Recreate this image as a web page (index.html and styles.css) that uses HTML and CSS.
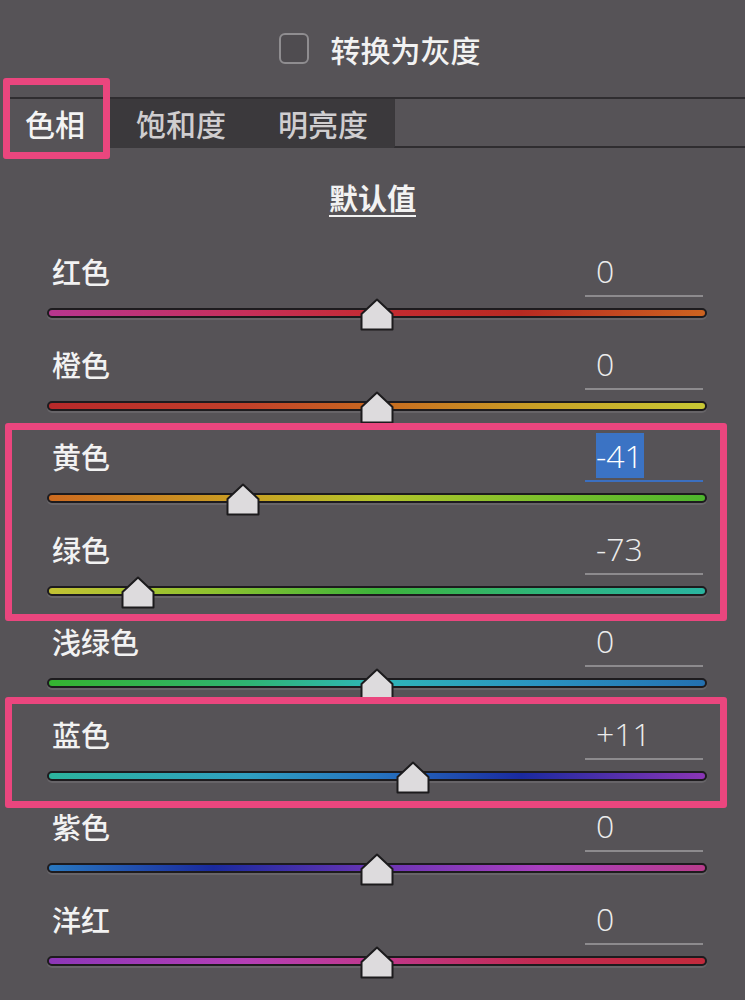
FILE: index.html
```html
<!DOCTYPE html>
<html lang="zh-CN">
<head>
    <meta charset="UTF-8">
    <meta name="viewport" content="width=device-width, initial-scale=1.0">
    <title>色相 / 饱和度 / 明亮度</title>
    <link rel="stylesheet" href="styles.css">
</head>
<body>
    <svg width="0" height="0" class="defs">
        <symbol id="thumb-shape" viewBox="0 0 34 33">
            <path d="M17 1.5 L32.5 16 L32.5 31.5 L1.5 31.5 L1.5 16 Z" fill="#dddbdd" stroke="#1c1b1d" stroke-width="2" stroke-linejoin="round"/>
        </symbol>
    </svg>

    <div class="panel">
        <div class="grayscale">
            <span class="checkbox"></span>
            <span class="grayscale-text">转换为灰度</span>
        </div>

        <div class="tabs">
            <div class="tab active">色相</div>
            <div class="tab-group">
                <div class="tab">饱和度</div>
                <div class="tab">明亮度</div>
            </div>
            <div class="tab-fill"></div>
        </div>

        <div class="defaults"><span class="defaults-link">默认值</span></div>

        <div class="sliders">
            <div class="slider">
                <div class="slider-head">
                    <span class="slider-label">红色</span>
                    <span class="slider-value">0</span>
                </div>
                <div class="track track-red">
                    <svg class="thumb" style="left: 50%"><use href="#thumb-shape"/></svg>
                </div>
            </div>
            <div class="slider">
                <div class="slider-head">
                    <span class="slider-label">橙色</span>
                    <span class="slider-value">0</span>
                </div>
                <div class="track track-orange">
                    <svg class="thumb" style="left: 50%"><use href="#thumb-shape"/></svg>
                </div>
            </div>
            <div class="slider">
                <div class="slider-head">
                    <span class="slider-label">黄色</span>
                    <span class="slider-value editing"><span class="selected">-41</span></span>
                </div>
                <div class="track track-yellow">
                    <svg class="thumb" style="left: 29.5%"><use href="#thumb-shape"/></svg>
                </div>
            </div>
            <div class="slider">
                <div class="slider-head">
                    <span class="slider-label">绿色</span>
                    <span class="slider-value">-73</span>
                </div>
                <div class="track track-green">
                    <svg class="thumb" style="left: 13.5%"><use href="#thumb-shape"/></svg>
                </div>
            </div>
            <div class="slider">
                <div class="slider-head">
                    <span class="slider-label">浅绿色</span>
                    <span class="slider-value">0</span>
                </div>
                <div class="track track-aqua">
                    <svg class="thumb" style="left: 50%"><use href="#thumb-shape"/></svg>
                </div>
            </div>
            <div class="slider">
                <div class="slider-head">
                    <span class="slider-label">蓝色</span>
                    <span class="slider-value">+11</span>
                </div>
                <div class="track track-blue">
                    <svg class="thumb" style="left: 55.5%"><use href="#thumb-shape"/></svg>
                </div>
            </div>
            <div class="slider">
                <div class="slider-head">
                    <span class="slider-label">紫色</span>
                    <span class="slider-value">0</span>
                </div>
                <div class="track track-purple">
                    <svg class="thumb" style="left: 50%"><use href="#thumb-shape"/></svg>
                </div>
            </div>
            <div class="slider">
                <div class="slider-head">
                    <span class="slider-label">洋红</span>
                    <span class="slider-value">0</span>
                </div>
                <div class="track track-magenta">
                    <svg class="thumb" style="left: 50%"><use href="#thumb-shape"/></svg>
                </div>
            </div>
        </div>

        <!-- highlight frames drawn over the panel -->
        <div class="mark mark-tab"></div>
        <div class="mark mark-yellow-green"></div>
        <div class="mark mark-blue"></div>
    </div>
</body>
</html>
```

FILE: styles.css
```css
body {
    margin: 0;
    background-color: #565357;
    font-family: 'Noto Sans CJK SC', 'Liberation Sans', sans-serif;
    color: #f2f2f2;
}

.defs {
    position: absolute;
}

.panel {
    position: relative;
    width: 745px;
    height: 1000px;
    overflow: hidden;
}

/* convert to grayscale checkbox */
.grayscale {
    height: 97px;
    display: flex;
    align-items: center;
    justify-content: center;
    padding-left: 14px;
    gap: 22px;
}

.checkbox {
    width: 30px;
    height: 31px;
    box-sizing: border-box;
    border: 2px solid #8f8d90;
    border-radius: 6px;
    background-color: #4f4c50;
}

.grayscale-text {
    font-size: 30px;
    font-weight: 500;
    line-height: 1;
}

/* tabs */
.tabs {
    display: flex;
    margin-left: 10px;
    border-top: 2px solid #2f2d30;
    height: 49px;
}

.tab {
    font-size: 30px;
    font-weight: 500;
    line-height: 49px;
    padding: 0 26px;
    color: #cfcdcf;
}

.tab.active {
    padding: 0 22px 0 15px;
    color: #f4f4f4;
}

.tab-group {
    display: flex;
    padding-left: 3px;
    background-color: #3b393c;
}

.tab-fill {
    flex: 1;
    border-left: 1px solid #3a383b;
    border-bottom: 2px solid #2f2d30;
}

/* reset link */
.defaults {
    height: 98px;
    display: flex;
    align-items: center;
    justify-content: center;
}

.defaults-link {
    font-size: 29px;
    font-weight: 700;
    line-height: 1;
    text-decoration: underline;
    text-underline-offset: 5px;
    text-decoration-thickness: 2px;
}

/* hue sliders */
.sliders {
    padding: 0 38px 0 47px;
}

.slider {
    height: 92.5px;
}

.slider-head {
    display: flex;
    justify-content: space-between;
    height: 51px;
}

.slider-label {
    padding-left: 5px;
    font-size: 29px;
    font-weight: 500;
    line-height: 50px;
}

.slider-value {
    width: 118px;
    margin-right: 4px;
    box-sizing: border-box;
    padding-left: 11px;
    border-bottom: 2px solid #8d8b8e;
    font-family: 'Open Sans', 'Liberation Sans', sans-serif;
    font-weight: 300;
    font-size: 32px;
    line-height: 49px;
    color: #ececec;
}

.slider-value.editing {
    border-bottom-color: #3b6fc0;
}

.selected {
    background-color: #3b73c4;
    color: #ffffff;
    padding: 1px 1px 1px 0;
}

.track {
    position: relative;
    margin-top: 11px;
    height: 10px;
    box-sizing: border-box;
    border: 2px solid #1d1b1e;
    border-radius: 5px;
    box-shadow: 0 2px 0 rgba(255, 255, 255, 0.1);
}

.thumb {
    position: absolute;
    top: -12px;
    width: 34px;
    height: 33px;
    transform: translateX(-50%);
}

.track-red {
    background: linear-gradient(90deg, #b7368f 0%, #c72f5a 30%, #c42b32 50%, #b82a22 72%, #cc6320 100%);
}

.track-orange {
    background: linear-gradient(90deg, #b8292a 0%, #c2402a 30%, #c8691f 50%, #c9a126 75%, #c8c834 100%);
}

.track-yellow {
    background: linear-gradient(90deg, #cc6a1f 0%, #c9a023 30%, #b3c42a 50%, #7cc02c 75%, #4db52d 100%);
}

.track-green {
    background: linear-gradient(90deg, #c3c233 0%, #8ec22f 25%, #3db33b 50%, #2fb57a 75%, #2ab4a0 100%);
}

.track-aqua {
    background: linear-gradient(90deg, #35b330 0%, #2fb371 30%, #2fb6b8 50%, #2a92c0 75%, #2470b0 100%);
}

.track-blue {
    background: linear-gradient(90deg, #2cb49e 0%, #2f9fc0 30%, #2674c0 50%, #1a2aa0 72%, #8a35b5 100%);
}

.track-purple {
    background: linear-gradient(90deg, #2978c0 0%, #1a2a9e 25%, #6a35b5 50%, #a93fbf 75%, #b83c8c 100%);
}

.track-magenta {
    background: linear-gradient(90deg, #8d37b8 0%, #b43fb6 30%, #c0388c 50%, #c22a50 75%, #c22a3c 100%);
}

/* pink highlight frames */
.mark {
    position: absolute;
    box-sizing: border-box;
    border: 7px solid #ea467e;
    border-radius: 3px;
}

.mark-tab {
    left: 3px;
    top: 78px;
    width: 107px;
    height: 81px;
}

.mark-yellow-green {
    left: 5px;
    top: 423px;
    width: 722px;
    height: 198px;
}

.mark-blue {
    left: 5px;
    top: 697px;
    width: 722px;
    height: 111px;
}
```
